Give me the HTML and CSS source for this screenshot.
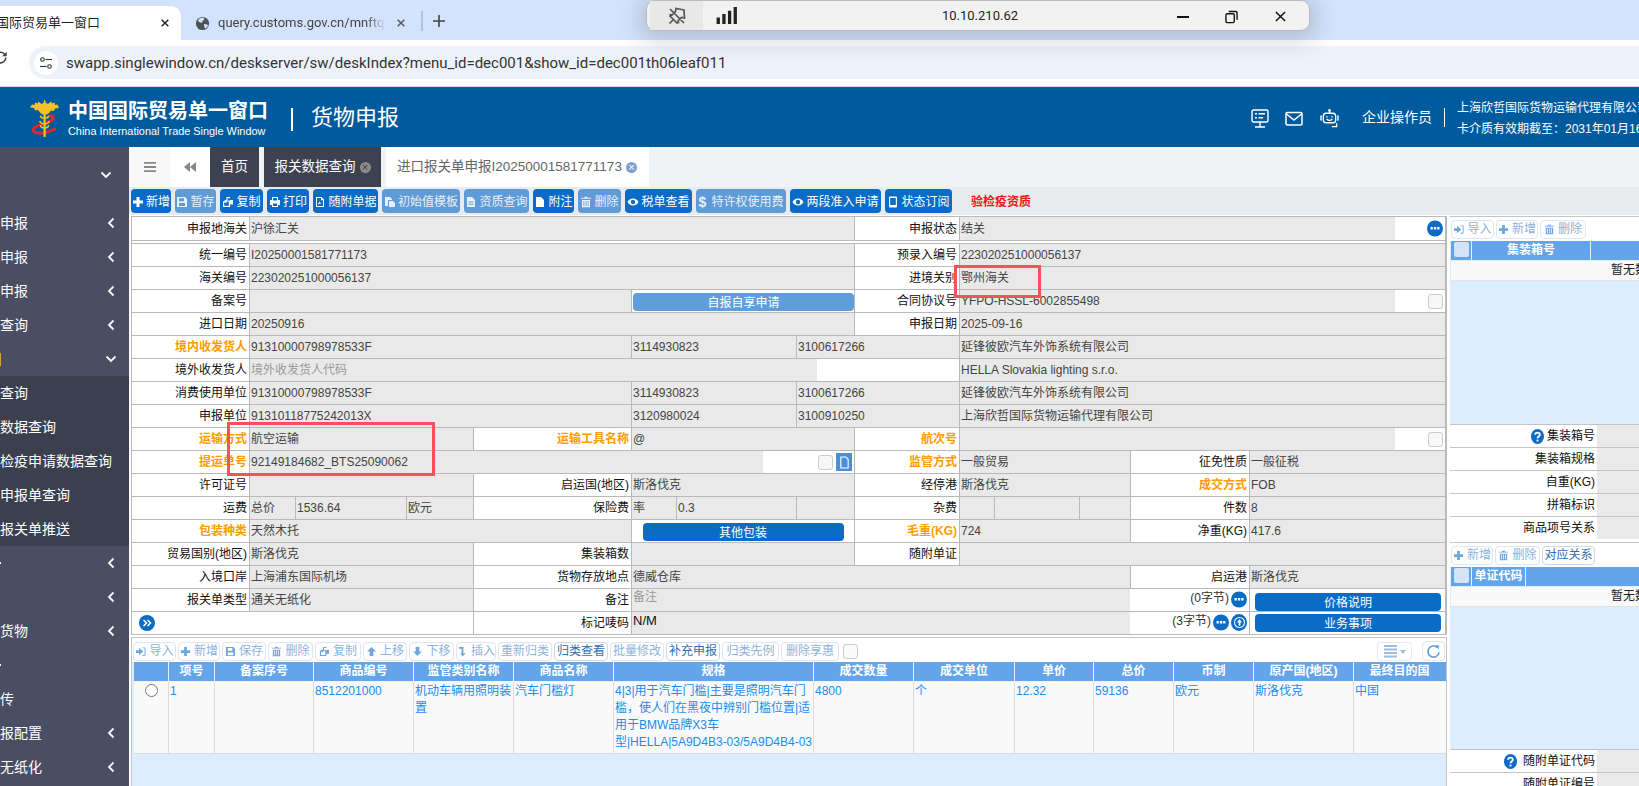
FILE: index.html
```html
<!DOCTYPE html>
<html lang="zh-CN">
<head>
<meta charset="utf-8">
<title>中国国际贸易单一窗口</title>
<link rel="stylesheet" href="styles.css">
</head>
<body>
<svg class="defs" aria-hidden="true">
  <symbol id="i-plus" viewBox="0 0 12 12"><path d="M4.500 1h3v3.500H11v3H7.500V11h-3V7.500H1v-3h3.500z"/></symbol>
  <symbol id="i-save" viewBox="0 0 12 12"><path fill-rule="evenodd" d="M1 1h8l2 2v8H1zM3 2.200v3h5v-3zM3 7v3h6V7z"/></symbol>
  <symbol id="i-copy" viewBox="0 0 12 12"><path fill-rule="evenodd" d="M4.500 1H8v3h3v4.500H8V11H1V5.500l3.500-2zM5.500 2.200v2.600L8 4.400V2.200zM2.200 6.200v3.600h4.600V5.600H4.500v1.600z"/></symbol>
  <symbol id="i-print" viewBox="0 0 12 12"><path fill-rule="evenodd" d="M3 1h6v3h2v5H9v2H3V9H1V4h2zM4 2v2.500h4V2zM4 7.500V10h4V7.500z"/></symbol>
  <symbol id="i-doc" viewBox="0 0 12 12"><path fill-rule="evenodd" d="M2 1h5.500L10 3.500V11H2zM3 2v8h6V4.200H7V2zM4 7.500c1-.2 1.500-1.500 1.500-3 .2 1.800 1 2.600 2.200 3-1.400 0-2.700.3-3.700 1z"/></symbol>
  <symbol id="i-files" viewBox="0 0 12 12"><path d="M1 1h5l2 2v1H4v6H1z"/><path d="M5 5h4l2 2v4H5z"/></symbol>
  <symbol id="i-file" viewBox="0 0 12 12"><path d="M2 1h5l3 3v7H2z"/></symbol>
  <symbol id="i-filetext" viewBox="0 0 12 12"><path fill-rule="evenodd" d="M2 1h5l3 3v7H2zM3.500 5.500v1h5v-1zM3.500 7.800v1h5v-1z"/></symbol>
  <symbol id="i-trash" viewBox="0 0 12 12"><path fill-rule="evenodd" d="M4.500.8h3v1H11v1H1v-1h3.500zM2 4h8v7.200H2zM3.500 5v5h.8V5zM5.600 5v5h.8V5zM7.700 5v5h.8V5z"/></symbol>
  <symbol id="i-eye" viewBox="0 0 12 12"><path fill-rule="evenodd" d="M6 2.500c2.500 0 4.400 1.500 5.500 3.500-1.100 2-3 3.500-5.500 3.500S1.600 8 .5 6C1.600 4 3.500 2.500 6 2.500zM6 3.800a2.200 2.200 0 1 0 0 4.400 2.200 2.200 0 0 0 0-4.400z"/></symbol>
  <symbol id="i-phone" viewBox="0 0 12 12"><path fill-rule="evenodd" d="M3 .5h6a1 1 0 0 1 1 1v9a1 1 0 0 1-1 1H3a1 1 0 0 1-1-1v-9a1 1 0 0 1 1-1zM3.200 2v7h5.600V2z"/></symbol>
  <symbol id="i-import" viewBox="0 0 12 12"><path d="M1 4.500h3.500V2L9 6l-4.500 4V7.500H1z"/><path d="M8 1.500h2.500a1 1 0 0 1 1 1v7a1 1 0 0 1-1 1H8v-1h2.500v-7H8z"/></symbol>
  <symbol id="i-up" viewBox="0 0 12 12"><path d="M6 1l5 5H8v5H4V6H1z"/></symbol>
  <symbol id="i-down" viewBox="0 0 12 12"><path d="M6 11L1 6h3V1h4v5h3z"/></symbol>
  <symbol id="i-insert" viewBox="0 0 12 12"><path d="M2 1h5v7h2.500L6 11.500 3.500 8H5V3H2z"/></symbol>
  <symbol id="i-dots" viewBox="0 0 16 16"><circle cx="8" cy="8" r="8"/><path fill="#fff" d="M3.500 6.500h2.300v2.600H3.500zM6.900 6.500h2.300v2.600H6.900zM10.200 6.500h2.300v2.600h-2.300z"/></symbol>
  <symbol id="i-help" viewBox="0 0 14 16"><ellipse cx="7" cy="8" rx="7" ry="8"/><path fill="none" stroke="#fff" stroke-width="2" d="M4.500 6c0-3 5-3 5 0 0 2-2.500 2-2.500 4"/><path fill="#fff" d="M6 11.300h2v2H6z"/></symbol>
  <symbol id="i-chev-l" viewBox="0 0 8 12"><path fill="none" stroke="currentColor" stroke-width="1.800" d="M6.500 1.500L2 6l4.500 4.500"/></symbol>
  <symbol id="i-chev-d" viewBox="0 0 12 8"><path fill="none" stroke="currentColor" stroke-width="1.800" d="M1.500 1.500L6 6l4.500-4.500"/></symbol>
  <symbol id="i-x" viewBox="0 0 12 12"><path fill="none" stroke="currentColor" stroke-width="1.700" d="M2 2l8 8M10 2l-8 8"/></symbol>
</svg>

<div class="app">
  <div class="tabstrip">
    <div class="ctab ctab-active">
      <span class="ctab-title">国际贸易单一窗口</span>
      <svg class="cx"><use href="#i-x"/></svg>
    </div>
    <div class="ctab ctab-idle">
      <svg class="globe" viewBox="0 0 16 16"><circle cx="8" cy="8" r="7" fill="#4c5156"/><path fill="#d3e3fd" d="M5 2.500l4-.8 1 2-2 1.500-.5 2-2.500-.5-2-1.500zM9.500 8.500l3.500.5.800 1.500-2.300 3-1.500-1.500z"/></svg>
      <span class="ctab-url">query.customs.gov.cn/mnftq</span>
      <svg class="cx cx-idle"><use href="#i-x"/></svg>
    </div>
    <span class="ctab-sep"></span>
    <svg class="cplus" viewBox="0 0 12 12"><path d="M5.200 0h1.600v5.200H12v1.600H6.800V12H5.200V6.800H0V5.200h5.200z"/></svg>
  </div>
  <div class="addrbar">
    <svg class="reload" viewBox="0 0 16 16"><path fill="none" stroke="#444" stroke-width="1.500" d="M13 8a5 5 0 1 1-1.500-3.500L13 6"/><path fill="#444" d="M13.800 2.500v4.300H9.500z"/></svg>
    <div class="omni">
      <span class="tune"><svg viewBox="0 0 14 14"><g fill="none" stroke="#333" stroke-width="1.100"><circle cx="3.500" cy="3.500" r="1.800"/><path d="M6.500 3.500H13"/><circle cx="10.500" cy="10.500" r="1.800"/><path d="M1 10.500h6.500"/></g></svg></span>
      <span class="url">swapp.singlewindow.cn/deskserver/sw/deskIndex?menu_id=dec001&amp;show_id=dec001th06leaf011</span>
    </div>
  </div>

  <header class="banner">
    <svg class="logo" viewBox="0 0 29 38">
      <path fill="none" stroke="#e3252d" stroke-width="3" stroke-linecap="round" d="M19 17c5-1 5 3 2 5-4 3-13 3-17 7-3 3 1 6 9 5 4-.5 8-2 12-4"/>
      <path fill="#f3c423" d="M14.500 0l1.500 4 2 1 3-2.500 1 2 2.500-1 .5 2.500 2.500-.5L29 9l-4 .5-1 2.500-3-.5-2 2.500-2.500 1.500h-4L10 13.500 8 11l-3 .5-1-2.500-4-.5L2 5.500l2.500.5L5 3.500l2.500 1 1-2 3 2.500 2-1z"/>
      <path fill="#f3c423" d="M13.500 14h2.200v24h-2.200z"/>
      <path fill="none" stroke="#f3c423" stroke-width="1.500" d="M10 17c2 3 7 3 9 0M9.500 22c2 4 8 4 10 0M10.500 26c0 4 8 4 8 0"/>
    </svg>
    <div class="brand">
      <div class="brand-cn">中国国际贸易单一窗口</div>
      <div class="brand-en">China International Trade Single Window</div>
    </div>
    <span class="banner-sep"></span>
    <span class="banner-title">货物申报</span>
    <div class="banner-right">
      <svg class="hicon" viewBox="0 0 18 19"><g fill="none" stroke="#fff" stroke-width="1.400"><rect x="1" y="1" width="16" height="12" rx="1.500"/><path d="M9 13v5M4 18h10"/></g><path fill="#fff" d="M4 4h2v1.500H4zM7.500 4H14v1.500H7.500zM4 8h2v1.500H4zM7.500 8H12v1.500H7.500z"/></svg>
      <svg class="hicon" viewBox="0 0 18 19"><g fill="none" stroke="#fff" stroke-width="1.500"><rect x="1" y="3.500" width="16" height="12.500" rx="1.500"/><path d="M1.500 5L9 11l7.500-6"/></g></svg>
      <svg class="hicon hicon-bot" viewBox="0 0 21 20"><g fill="none" stroke="#fff" stroke-width="1.400"><rect x="4" y="4.500" width="13" height="10" rx="3"/><path d="M2.500 7.500h-1v4h1M18.500 7.500h1v4h-1M10.500 2v2.500M7.500 10.500c2 2 4 2 6 0M18 15v3.500h-5"/></g><circle cx="10.500" cy="1.500" r="1.400" fill="#fff"/><path fill="#fff" d="M7 7.500h1.500v1.500H7zM12.500 7.500H14v1.500h-1.500z"/></svg>
      <span class="operator">企业操作员</span>
      <span class="banner-sep2"></span>
      <div class="company">
        <div>上海欣哲国际货物运输代理有限公司</div>
        <div>卡介质有效期截至：2031年01月16日</div>
      </div>
    </div>
  </header>

  <div class="main">
    <nav class="sidebar">
      <div class="nav-top"><svg class="chev-d"><use href="#i-chev-d"/></svg></div>
      <div class="nav-item"><span>申报</span><svg class="chev-l"><use href="#i-chev-l"/></svg></div>
      <div class="nav-item"><span>申报</span><svg class="chev-l"><use href="#i-chev-l"/></svg></div>
      <div class="nav-item"><span>申报</span><svg class="chev-l"><use href="#i-chev-l"/></svg></div>
      <div class="nav-item"><span>查询</span><svg class="chev-l"><use href="#i-chev-l"/></svg></div>
      <div class="nav-item"><span class="sliver-o"></span><svg class="chev-d"><use href="#i-chev-d"/></svg></div>
      <div class="nav-sub">
        <div class="nav-subitem">查询</div>
        <div class="nav-subitem">数据查询</div>
        <div class="nav-subitem">检疫申请数据查询</div>
        <div class="nav-subitem">申报单查询</div>
        <div class="nav-subitem">报关单推送</div>
      </div>
      <div class="nav-item"><span class="sliver-w"></span><svg class="chev-l"><use href="#i-chev-l"/></svg></div>
      <div class="nav-item"><span></span><svg class="chev-l"><use href="#i-chev-l"/></svg></div>
      <div class="nav-item"><span>货物</span><svg class="chev-l"><use href="#i-chev-l"/></svg></div>
      <div class="nav-item"><span class="sliver-w"></span></div>
      <div class="nav-item"><span>传</span></div>
      <div class="nav-item"><span>报配置</span><svg class="chev-l"><use href="#i-chev-l"/></svg></div>
      <div class="nav-item"><span>无纸化</span><svg class="chev-l"><use href="#i-chev-l"/></svg></div>
    </nav>

    <div class="content">
      <div class="pagetabs">
        <div class="pt-tool pt-menu"><svg viewBox="0 0 12 12"><path fill="#888" d="M0 1h12v1.800H0zM0 5.100h12v1.800H0zM0 9.200h12V11H0z"/></svg></div>
        <div class="pt-tool pt-back"><svg viewBox="0 0 12 12"><path fill="#888" d="M6 1v10L0 6zM12 1v10L6 6z"/></svg></div>
        <div class="pt pt-dark pt-home">首页</div>
        <div class="pt pt-dark pt-query">报关数据查询<span class="pt-x pt-x-dark">×</span></div>
        <div class="pt pt-cur">进口报关单申报I20250001581771173<span class="pt-x pt-x-cur">×</span></div>
      </div>

      <div class="toolbar">
        <button class="tb w40"><svg class="ic"><use href="#i-plus"/></svg>新增</button>
        <button class="tb off w41"><svg class="ic"><use href="#i-save"/></svg>暂存</button>
        <button class="tb w43"><svg class="ic"><use href="#i-copy"/></svg>复制</button>
        <button class="tb w42"><svg class="ic"><use href="#i-print"/></svg>打印</button>
        <button class="tb w65"><svg class="ic"><use href="#i-doc"/></svg>随附单据</button>
        <button class="tb off w78"><svg class="ic"><use href="#i-files"/></svg>初始值模板</button>
        <button class="tb off w65"><svg class="ic"><use href="#i-filetext"/></svg>资质查询</button>
        <button class="tb w41"><svg class="ic"><use href="#i-file"/></svg>附注</button>
        <button class="tb off w43"><svg class="ic"><use href="#i-trash"/></svg>删除</button>
        <button class="tb w67"><svg class="ic"><use href="#i-eye"/></svg>税单查看</button>
        <button class="tb off w90"><span class="dollar">$</span>特许权使用费</button>
        <button class="tb w91"><svg class="ic"><use href="#i-eye"/></svg>两段准入申请</button>
        <button class="tb w67"><svg class="ic"><use href="#i-phone"/></svg>状态订阅</button>
        <span class="tb-red">验检疫资质</span>
      </div>

      <div class="work">
        <div class="leftcol">
          <div class="form">
            <div class="lb ab first">申报地海关</div><div class="v bl first">沪徐汇关</div><div class="lb lm first">申报状态</div>
            <div class="v ms split first"><span>结关</span><span class="tail t50"><svg class="dots"><use href="#i-dots"/></svg></span></div>
            <div class="spacer"></div>

            <div class="lb ab">统一编号</div><div class="v bl">I20250001581771173</div><div class="lb lm">预录入编号</div><div class="v ms">223020251000056137</div>
            <div class="lb ab">海关编号</div><div class="v bl">223020251000056137</div><div class="lb lm">进境关别</div><div class="v ms">鄂州海关</div>
            <div class="lb ab">备案号</div><div class="v bf"></div><div class="lb fl btn-cell"><button class="wide pale">自报自享申请</button></div><div class="lb lm">合同协议号</div>
            <div class="v ms split"><span>YFPO-HSSL-6002855498</span><span class="tail t50"><span class="check"></span></span></div>
            <div class="lb ab">进口日期</div><div class="v bl">20250916</div><div class="lb lm">申报日期</div><div class="v ms">2025-09-16</div>
            <div class="lb ab must">境内收发货人</div><div class="v bf">91310000798978533F</div><div class="v fj">3114930823</div><div class="v jm">3100617266</div><div class="v ms">延锋彼欧汽车外饰系统有限公司</div>
            <div class="lb ab">境外收发货人</div><div class="v bm split"><span class="ph">境外收发货人代码</span><span class="tail t142"></span></div><div class="v ms">HELLA Slovakia lighting s.r.o.</div>
            <div class="lb ab">消费使用单位</div><div class="v bf">91310000798978533F</div><div class="v fj">3114930823</div><div class="v jm">3100617266</div><div class="v ms">延锋彼欧汽车外饰系统有限公司</div>
            <div class="lb ab">申报单位</div><div class="v bf">91310118775242013X</div><div class="v fj">3120980024</div><div class="v jm">3100910250</div><div class="v ms">上海欣哲国际货物运输代理有限公司</div>

            <div class="lb ab must">运输方式</div><div class="v be">航空运输</div><div class="lb ef must">运输工具名称</div><div class="v fl">@</div><div class="lb lm must">航次号</div>
            <div class="v ms split"><span></span><span class="tail t50"><span class="check"></span></span></div>

            <div class="lb ab must">提运单号</div>
            <div class="v bl split"><span>92149184682_BTS25090062</span><span class="tail t91"><span class="check"></span><span class="docbtn"><svg viewBox="0 0 12 14"><path fill="none" stroke="#fff" stroke-width="1.200" d="M2 1h5.500L10 3.500V13H2z"/></svg></span></span></div>
            <div class="lb lm must">监管方式</div><div class="v mp">一般贸易</div><div class="lb pq">征免性质</div><div class="v qs">一般征税</div>

            <div class="lb ab">许可证号</div><div class="v be"></div><div class="lb ef">启运国(地区)</div><div class="v fl">斯洛伐克</div><div class="lb lm">经停港</div><div class="v mp">斯洛伐克</div><div class="lb pq must">成交方式</div><div class="v qs">FOB</div>

            <div class="lb ab">运费</div><div class="v bc">总价</div><div class="v cd">1536.64</div><div class="v de">欧元</div><div class="lb ef">保险费</div><div class="v fg">率</div><div class="v gi">0.3</div><div class="v il"></div><div class="lb lm">杂费</div><div class="v mn"></div><div class="v no"></div><div class="v op"></div><div class="lb pq">件数</div><div class="v qs">8</div>

            <div class="lb ab must">包装种类</div><div class="v bf">天然木托</div><div class="lb fl btn-cell center"><button class="mid">其他包装</button></div><div class="lb lm must">毛重(KG)</div><div class="v mp">724</div><div class="lb pq">净重(KG)</div><div class="v qs">417.6</div>

            <div class="lb ab">贸易国别(地区)</div><div class="v be">斯洛伐克</div><div class="lb ef">集装箱数</div><div class="v fl"></div><div class="lb lm">随附单证</div><div class="v ms"></div>
            <div class="lb ab">入境口岸</div><div class="v be">上海浦东国际机场</div><div class="lb ef">货物存放地点</div><div class="v fp">德威仓库</div><div class="lb pq">启运港</div><div class="v qs">斯洛伐克</div>

            <div class="lb ab">报关单类型</div><div class="v be">通关无纸化</div><div class="lb ef">备注</div>
            <div class="v fq split top"><span class="ph">备注</span><span class="tail t119 bytes"><span>(0字节)</span><svg class="dots"><use href="#i-dots"/></svg></span></div>
            <div class="lb qs btn-cell"><button class="wide2 low">价格说明</button></div>

            <div class="lb ae leftstart"><span class="round"><svg viewBox="0 0 12 12"><path fill="none" stroke="#fff" stroke-width="1.500" d="M2.500 3l3 3-3 3M6.500 3l3 3-3 3"/></svg></span></div><div class="lb ef">标记唛码</div>
            <div class="v fq split top"><span class="dark">N/M</span><span class="tail t119 bytes"><span>(3字节)</span><svg class="dots"><use href="#i-dots"/></svg><span class="upl"><svg viewBox="0 0 12 12"><circle cx="6" cy="6" r="4.600" fill="none" stroke="#fff"/><path fill="#fff" d="M6 2.800L8.300 6H6.800v3H5.200V6H3.700z"/></svg></span></span></div>
            <div class="lb qs btn-cell"><button class="wide2">业务事项</button></div>
          </div>

          <section class="goods">
            <div class="g-tools">
              <button class="gb w43"><svg class="ic"><use href="#i-import"/></svg>导入</button>
              <button class="gb w42"><svg class="ic"><use href="#i-plus"/></svg>新增</button>
              <button class="gb w44"><svg class="ic"><use href="#i-save"/></svg>保存</button>
              <button class="gb w45"><svg class="ic"><use href="#i-trash"/></svg>删除</button>
              <button class="gb w46"><svg class="ic"><use href="#i-copy"/></svg>复制</button>
              <button class="gb w44"><svg class="ic"><use href="#i-up"/></svg>上移</button>
              <button class="gb w45"><svg class="ic"><use href="#i-down"/></svg>下移</button>
              <button class="gb w40"><svg class="ic"><use href="#i-insert"/></svg>插入</button>
              <button class="gb w54">重新归类</button>
              <button class="gb w54 on">归类查看</button>
              <button class="gb w54">批量修改</button>
              <button class="gb w54 on">补充申报</button>
              <button class="gb w57">归类先例</button>
              <button class="gb w58">删除享惠</button>
              <span class="g-check"></span>
              <span class="g-right">
                <span class="g-list"><svg viewBox="0 0 22 14"><path fill="#9dbde0" d="M0 1h13v2H0zM0 4.500h13v2H0zM0 8h13v2H0zM0 11.500h13v2H0zM16 6h6l-3 4z"/></svg></span>
                <span class="g-refresh"><svg viewBox="0 0 14 16"><path fill="none" stroke="#5fa0de" stroke-width="1.800" d="M11.500 4A6 6 0 1 0 13 9"/><path fill="#5fa0de" d="M9 1l4 .5-.5 4z"/></svg></span>
              </span>
            </div>
            <div class="g-grid g-head">
              <div></div><div>项号</div><div>备案序号</div><div>商品编号</div><div>监管类别名称</div><div>商品名称</div><div>规格</div><div>成交数量</div><div>成交单位</div><div>单价</div><div>总价</div><div>币制</div><div>原产国(地区)</div><div>最终目的国</div>
            </div>
            <div class="g-grid g-row">
              <div class="g-radio"><span class="radio"></span></div><div>1</div><div></div><div>8512201000</div><div>机动车辆用照明装置</div><div>汽车门槛灯</div><div>4|3|用于汽车门槛|主要是照明汽车门槛，使人们在黑夜中辨别门槛位置|适用于BMW品牌X3车型|HELLA|5A9D4B3-03/5A9D4B4-03</div><div>4800</div><div>个</div><div>12.32</div><div>59136</div><div>欧元</div><div>斯洛伐克</div><div>中国</div>
            </div>
          </section>
        </div>

        <aside class="side">
          <section class="s-panel s-panel-a">
            <div class="s-tools">
              <button class="gb w43"><svg class="ic"><use href="#i-import"/></svg>导入</button>
              <button class="gb w42"><svg class="ic"><use href="#i-plus"/></svg>新增</button>
              <button class="gb w46"><svg class="ic"><use href="#i-trash"/></svg>删除</button>
            </div>
            <div class="s-head"><span class="s-chk"><span></span></span><span class="s-col s-col-a">集装箱号</span><span class="s-col"></span></div>
            <div class="s-empty">暂无数据</div>
          </section>
          <div class="s-rows">
            <div class="s-row"><div class="s-lb"><svg class="help"><use href="#i-help"/></svg>集装箱号</div><div class="s-v"></div></div>
            <div class="s-row"><div class="s-lb">集装箱规格</div><div class="s-v"></div></div>
            <div class="s-row"><div class="s-lb">自重(KG)</div><div class="s-v"></div></div>
            <div class="s-row"><div class="s-lb">拼箱标识</div><div class="s-v"></div></div>
            <div class="s-row"><div class="s-lb">商品项号关系</div><div class="s-v"></div></div>
          </div>
          <section class="s-panel s-panel-b">
            <div class="s-tools">
              <button class="gb w42"><svg class="ic"><use href="#i-plus"/></svg>新增</button>
              <button class="gb w45"><svg class="ic"><use href="#i-trash"/></svg>删除</button>
              <button class="gb w53 on">对应关系</button>
            </div>
            <div class="s-head"><span class="s-chk"><span></span></span><span class="s-col s-col-b">单证代码</span><span class="s-col"></span></div>
            <div class="s-empty">暂无数据</div>
          </section>
          <div class="s-rows">
            <div class="s-row"><div class="s-lb"><svg class="help help-wide"><use href="#i-help"/></svg>随附单证代码</div><div class="s-v"></div></div>
            <div class="s-row"><div class="s-lb">随附单证编号</div><div class="s-v"></div></div>
          </div>
        </aside>
      </div>
    </div>
  </div>

  <div class="remote">
    <span class="r-pin"><svg viewBox="0 0 18 18"><g fill="none" stroke="#555" stroke-width="1.700"><path d="M2 2l14 14M16 3L8 1.500l-.5 3L4 8l-1.500-.5L2 9l7 7 1.500-.5L10 14l3.500-3.500 3 .5z"/><path d="M5 13l-3.500 3.500"/></g></svg></span>
    <svg class="r-signal" viewBox="0 0 22 18"><path fill="#222" d="M0 11h3.500v7H0zM6 7.500h3.500V18H6zM12 4h3.500v14H12zM18 0h3.500v18H18z"/></svg>
    <span class="r-ip">10.10.210.62</span>
    <span class="r-btn r-min"></span>
    <svg class="r-btn r-res" viewBox="0 0 14 14"><g fill="none" stroke="#111" stroke-width="1.500"><rect x="1" y="3.500" width="9" height="9.500" rx="1.500"/><path d="M4 1h7.500A1.500 1.500 0 0 1 13 2.500V10"/></g></svg>
    <svg class="r-btn r-close" viewBox="0 0 12 12"><path fill="none" stroke="#111" stroke-width="1.600" d="M1 1l10 10M11 1L1 11"/></svg>
  </div>

  <div class="mark mark-a"></div>
  <div class="mark mark-b"></div>
</div>
</body>
</html>
```

FILE: styles.css
```css
* { box-sizing: border-box; }
html, body { margin: 0; height: 100%; overflow: hidden; }
body { font: 12px/1.2 "Liberation Sans", "Noto Sans CJK SC", sans-serif; color: #222; background: #fff; }
button { font: inherit; cursor: default; }
.defs { position: absolute; width: 0; height: 0; }

.app { position: relative; width: 1639px; height: 786px; overflow: hidden; display: flex; flex-direction: column; }

/* browser chrome */
.tabstrip { height: 40px; flex: none; background: #d3e3fd; display: flex; align-items: flex-end; font-family: "Roboto", "Noto Sans CJK SC", sans-serif; font-size: 13px; }
.ctab { height: 34px; display: flex; align-items: center; position: relative; overflow: hidden; }
.ctab-active { width: 181px; background: #fff; border-radius: 0 10px 0 0; color: #1f1f1f; }
.ctab-title { margin-left: -4px; width: 160px; white-space: nowrap; }
.cx { width: 10px; height: 10px; color: #222; margin-left: 4px; flex: none; }
.ctab-idle { width: 240px; padding-left: 14px; color: #444; }
.globe { width: 15px; height: 15px; flex: none; }
.ctab-url { margin-left: 8px; width: 168px; white-space: nowrap; overflow: hidden; -webkit-mask-image: linear-gradient(90deg, #000 88%, transparent); mask-image: linear-gradient(90deg, #000 88%, transparent); }
.cx-idle { color: #555; margin-left: 10px; }
.ctab-sep { position: absolute; left: 421px; top: 11px; width: 2px; height: 20px; background: #a9c3ea; }
.cplus { position: absolute; left: 433px; top: 15px; width: 12px; height: 12px; fill: #444; }

.addrbar { height: 47px; flex: none; background: #fff; border-bottom: 1px solid #d9d9d9; display: flex; align-items: center; padding-left: 0; position: relative; }
.reload { position: absolute; left: -8px; top: 9px; width: 17px; height: 17px; }
.omni { margin-left: 29px; margin-top: -1px; flex: 1; height: 33px; border-radius: 17px 0 0 17px; background: #edf2fa; display: flex; align-items: center; padding-left: 5px; }
.tune { width: 24px; height: 24px; border-radius: 50%; background: #fff; display: flex; align-items: center; justify-content: center; flex: none; }
.tune svg { width: 14px; height: 14px; }
.url { margin-left: 8px; font: 15px "Roboto", sans-serif; color: #333; white-space: nowrap; }

/* site header */
.banner { height: 60px; flex: none; background: #005a9e; color: #fff; display: flex; align-items: center; padding-left: 30px; }
.logo { width: 29px; height: 38px; flex: none; margin-top: 2px; }
.brand { margin-left: 9px; width: 200px; margin-top: 2px; }
.brand-cn { font-size: 20px; font-weight: 700; line-height: 26px; white-space: nowrap; }
.brand-en { font-size: 10.900px; line-height: 14px; white-space: nowrap; }
.banner-sep { width: 2px; height: 23px; background: #fff; margin-left: 23px; margin-top: 4px; }
.banner-title { font-size: 22px; margin-left: 18px; margin-top: 2px; white-space: nowrap; }
.banner-right { margin-left: auto; width: 388px; flex: none; height: 100%; display: flex; align-items: center; overflow: hidden; white-space: nowrap; }
.hicon { width: 18px; height: 19px; flex: none; margin-right: 16px; margin-top: 3px; }
.hicon-bot { width: 21px; }
.operator { font-size: 14px; margin-left: 6px; }
.banner-sep2 { width: 1px; height: 19px; background: #fff; margin-left: 12px; flex: none; }
.company { margin-left: 12px; margin-top: 3px; line-height: 21px; font-size: 12px; flex: none; }

.main { flex: 1; display: flex; min-height: 0; }

/* sidebar */
.sidebar { width: 129px; flex: none; background: #4a4e63; color: #fff; font-size: 14px; }
.nav-top { height: 59px; display: flex; justify-content: flex-end; padding: 24px 19px 0 0; }
.nav-item { height: 34px; display: flex; align-items: center; justify-content: space-between; padding-right: 14px; }
.nav-sub { background: #3b404f; }
.nav-subitem { height: 34px; line-height: 34px; white-space: nowrap; }
.chev-l { width: 8px; height: 12px; color: #fff; margin-left: auto; }
.chev-d { width: 12px; height: 8px; color: #fff; margin-left: auto; margin-right: -2px; }
.sliver-o { width: 1px; height: 13px; background: #e69a3c; }
.sliver-w { width: 1px; height: 2px; background: #fff; }

/* page tabs */
.content { flex: 1; min-width: 0; display: flex; flex-direction: column; background: #fff; }
.pagetabs { height: 40px; flex: none; background: #eff3f4; display: flex; font-size: 13.500px; }
.pt-tool { width: 41px; background: #f8f8f8; display: flex; align-items: center; justify-content: center; }
.pt-back { width: 40px; background: #fff; }
.pt-tool svg { width: 12px; height: 12px; }
.pt { display: flex; align-items: center; white-space: nowrap; margin-right: 5px; }
.pt-dark { background: #3d4250; color: #fff; justify-content: center; }
.pt-home { width: 49px; }
.pt-query { width: 117px; }
.pt-cur { width: 263px; background: #fff; color: #666; padding-left: 11px; }
.pt-x { width: 11px; height: 11px; border-radius: 50%; display: inline-flex; align-items: center; justify-content: center; font-size: 11px; line-height: 1; margin-left: 4px; flex: none; }
.pt-x-dark { background: #8a8a8a; color: #3d4250; }
.pt-x-cur { background: #7f9fcf; color: #fff; }

/* main toolbar */
.toolbar { height: 28px; flex: none; background: #e7ebee; display: flex; align-items: center; gap: 4px; padding-left: 2px; }
.tb { height: 24px; border: 0; border-radius: 4px; background: #0a6cc6; color: #fff; padding: 2px 0 0; display: flex; align-items: center; justify-content: center; gap: 2px; white-space: nowrap; }
.tb.off { background: #5f9bd6; color: #e8f0fa; }
.ic { width: 12px; height: 12px; fill: currentColor; flex: none; }
.dollar { font-weight: 700; font-size: 14px; margin-right: 3px; }
.tb-red { color: #f01414; font-weight: 700; margin-left: 15px; padding-top: 2px; }
.w40 { width: 40px; } .w41 { width: 41px; } .w42 { width: 42px; } .w43 { width: 43px; } .w44 { width: 44px; } .w45 { width: 45px; } .w46 { width: 46px; } .w53 { width: 53px; } .w54 { width: 54px; } .w57 { width: 57px; } .w58 { width: 58px; } .w65 { width: 65px; } .w67 { width: 67px; } .w78 { width: 78px; } .w90 { width: 90px; } .w91 { width: 91px; }

/* work area */
.work { flex: 1; min-height: 0; display: flex; padding: 1px 0 0 2px; background: #fff; }
.leftcol { width: 1316px; flex: none; display: flex; flex-direction: column; }

.form {
  flex: none; padding: 1px; background: #b9b9b9; display: grid; gap: 1px;
  grid-template-columns: [a] 117px [b] 45px [c] 110px [d] 66px [e] 157px [f] 44px [g] 110px [i] 8px [j] 57px [l] 104px [m] 34px [n] 84px [o] 50px [p] 118px [q] 195px [s];
  grid-template-rows: 23px 2px repeat(17, 22px);
}
.spacer { grid-column: a / s; background: #fff; }
.lb, .v { line-height: 23px; white-space: nowrap; overflow: hidden; min-width: 0; }
.lb.first, .v.first { line-height: 24px; }
.lb { background: #fff; text-align: right; padding-right: 2px; color: #111; }
.v { background: #e9e9e9; padding-left: 1px; color: #444; }
.must { color: #ff9c00; font-weight: 700; }
.ph { color: #999; }
.dark { color: #111; font-size: 13px; }
.split { display: flex; justify-content: space-between; padding-right: 0; }
.v.top { line-height: 17px; }
.tail { background: #fff; flex: none; height: 100%; display: flex; align-items: center; justify-content: flex-end; padding-right: 2px; gap: 2px; }
.t50 { width: 50px; }
.t91 { width: 91px; }
.t119 { width: 119px; }
.t142 { width: 142px; }
.bytes { align-items: flex-start; padding-top: 2px; color: #333; line-height: 15px; }
.dots { width: 16px; height: 17px; fill: #0a6cc6; flex: none; }
.check { width: 15px; height: 15px; border: 1px solid #ccc; border-radius: 3px; background: #f7f7f7; flex: none; }
.docbtn { width: 16px; height: 18px; background: #4a90d9; display: flex; align-items: center; justify-content: center; flex: none; margin-left: 1px; }
.docbtn svg { width: 11px; height: 13px; }
.upl { width: 16px; height: 17px; border-radius: 50%; background: #0a6cc6; display: flex; align-items: center; justify-content: center; flex: none; }
.upl svg { width: 13px; height: 13px; }
.round { width: 16px; height: 16px; border-radius: 50%; background: #0a6cc6; display: flex; align-items: center; justify-content: center; margin-left: 7px; }
.round svg { width: 12px; height: 12px; }
.leftstart { display: flex; align-items: center; padding: 0; }

.btn-cell { padding: 0; display: flex; align-items: center; }
.center { justify-content: center; }
.btn-cell button { height: 18px; border: 0; border-radius: 4px; color: #fff; background: #0a6cc6; padding: 1px 0 0; line-height: 18px; }
.btn-cell button.pale { background: #5f9edb; }
.wide { width: 100%; margin: 1px 0 0 1px; }
.btn-cell .mid { width: 201px; margin-top: 1px; }
.btn-cell .wide2 { width: 186px; margin-left: 5px; }
.btn-cell .low { margin-top: 4px; }

.ab { grid-column: a / b; } .ae { grid-column: a / e; } .bc { grid-column: b / c; } .be { grid-column: b / e; } .bf { grid-column: b / f; } .bl { grid-column: b / l; } .bm { grid-column: b / m; }
.cd { grid-column: c / d; } .de { grid-column: d / e; } .ef { grid-column: e / f; } .fg { grid-column: f / g; } .fj { grid-column: f / j; } .fl { grid-column: f / l; } .fp { grid-column: f / p; } .fq { grid-column: f / q; }
.gi { grid-column: g / j; } .il { grid-column: j / l; } .jm { grid-column: j / m; } .lm { grid-column: l / m; } .mn { grid-column: m / n; } .mp { grid-column: m / p; } .ms { grid-column: m / s; }
.no { grid-column: n / o; } .op { grid-column: o / p; } .pq { grid-column: p / q; } .qs { grid-column: q / s; }

/* goods panel */
.goods { flex: 1; min-height: 0; margin-top: 2px; border: 1px solid #c4c4c4; border-bottom: 0; background: #deedfd; padding-left: 2px; }
.g-tools { height: 24px; margin-left: -2px; background: #fff; display: flex; align-items: center; gap: 2px; padding: 2px 0 0 1px; }
.gb { height: 19px; border: 1px solid #dfe6ee; border-radius: 4px; background: #fff; color: #8db3dd; padding: 1px 0 0; display: flex; align-items: center; justify-content: center; gap: 3px; white-space: nowrap; flex: none; }
.gb .ic { width: 11px; height: 11px; color: #6ea6de; }
.gb.on { color: #2f6fad; border-color: #cfd8e2; }
.g-check { width: 15px; height: 15px; border: 1px solid #ccc; border-radius: 3px; margin-left: 2px; background: #fafafa; flex: none; }
.g-right { margin-left: auto; display: flex; align-items: center; gap: 10px; padding-right: 1px; }
.g-list { width: 35px; height: 19px; border: 1px solid #e6ebf1; border-radius: 3px; display: flex; align-items: center; justify-content: center; }
.g-list svg { width: 22px; height: 14px; }
.g-refresh { width: 23px; height: 20px; border: 1px solid #dfe6ee; border-radius: 4px; display: flex; align-items: center; justify-content: center; }
.g-refresh svg { width: 13px; height: 15px; }
.g-grid { display: grid; grid-template-columns: 35px 46px 99px 100px 100px 100px 200px 100px 101px 79px 80px 80px 100px 91px; }
.g-head { height: 19px; background: #64a5e9; color: #fff; font-weight: 700; text-align: center; line-height: 19px; }
.g-head div { border-right: 1px solid #e8f2fc; }
.g-head div:last-child { border-right: 0; }
.g-row { height: 73px; border-top: 1px solid #eef3f8; border-bottom: 1px solid #ddd; background: #f9f9f9; color: #1b8cf2; line-height: 17px; }
.g-row div { border-right: 1px solid #e4d8da; padding: 1px 0 0 1px; min-width: 0; overflow: hidden; }
.g-row div:last-child { border-right: 0; }
.g-radio { display: flex; justify-content: center; }
.radio { width: 13px; height: 13px; margin-top: 1px; border: 1px solid #777; border-radius: 50%; background: #fff; }

/* right column */
.side { width: 189px; flex: none; margin-left: 3px; display: flex; flex-direction: column; }
.s-panel { background: #deedfd; border-top: 1px solid #c4c4c4; overflow: hidden; flex: none; }
.s-panel-a { height: 208px; }
.s-panel-b { height: 207px; margin-top: 3px; }
.s-tools { height: 24px; background: #fff; display: flex; align-items: center; gap: 2px; padding: 0 0 0 1px; }
.s-head { height: 19px; display: flex; background: #64a5e9; color: #fff; font-weight: 700; margin-left: 1px; line-height: 19px; }
.s-chk { width: 21px; flex: none; border-right: 1px solid #e8f2fc; padding: 1px 0 0 3px; }
.s-chk span { display: block; width: 15px; height: 15px; background: #d5e3f5; border-radius: 2px; }
.s-col { flex: 1; text-align: center; padding: 0 2px; }
.s-col-a { flex: none; width: 119px; border-right: 1px solid #e8f2fc; }
.s-col-b { flex: none; width: 54px; border-right: 1px solid #e8f2fc; white-space: nowrap; }
.s-empty { height: 20px; margin: 1px 0 0 1px; width: 368px; background: #f9f9f9; border-bottom: 1px solid #e4e4e4; text-align: center; line-height: 19px; color: #222; white-space: nowrap; }
.s-rows { flex: none; }
.s-row { height: 23px; display: flex; border-top: 1px solid #c4c4c4; }
.s-lb { width: 147px; flex: none; background: #fff; text-align: right; padding-right: 2px; line-height: 23px; color: #111; display: flex; justify-content: flex-end; align-items: center; gap: 3px; white-space: nowrap; }
.s-v { flex: 1; background: #e9e9e9; }
.help { width: 13px; height: 15px; fill: #0a6cc6; flex: none; }
.help-wide { margin-right: 3px; }

/* remote session bar */
.remote { position: absolute; left: 646px; top: 0; width: 664px; height: 31px; background: #f2f2f2; border-radius: 9px; border: 1px solid #b8bcc4; box-shadow: 0 3px 22px 6px rgba(60, 60, 60, .22); display: flex; align-items: center; font: 13px "Roboto", sans-serif; color: #222; }
.r-pin { width: 53px; height: 100%; margin-left: 3px; background: #e8e8e8; display: flex; align-items: center; justify-content: center; }
.r-pin svg { width: 18px; height: 18px; }
.r-signal { width: 22px; height: 17px; margin-left: 13px; }
.r-ip { position: absolute; left: 293px; width: 80px; text-align: center; }
.r-btn { position: absolute; }
.r-min { left: 530px; top: 15px; width: 12px; height: 2px; background: #111; }
.r-res { left: 578px; top: 9px; width: 13px; height: 14px; }
.r-close { left: 628px; top: 10px; width: 11px; height: 11px; }

/* annotation rectangles */
.mark { position: absolute; border: 3px solid #f8515a; }
.mark-a { left: 227px; top: 422px; width: 208px; height: 54px; }
.mark-b { left: 954px; top: 265px; width: 87px; height: 33px; }
```
